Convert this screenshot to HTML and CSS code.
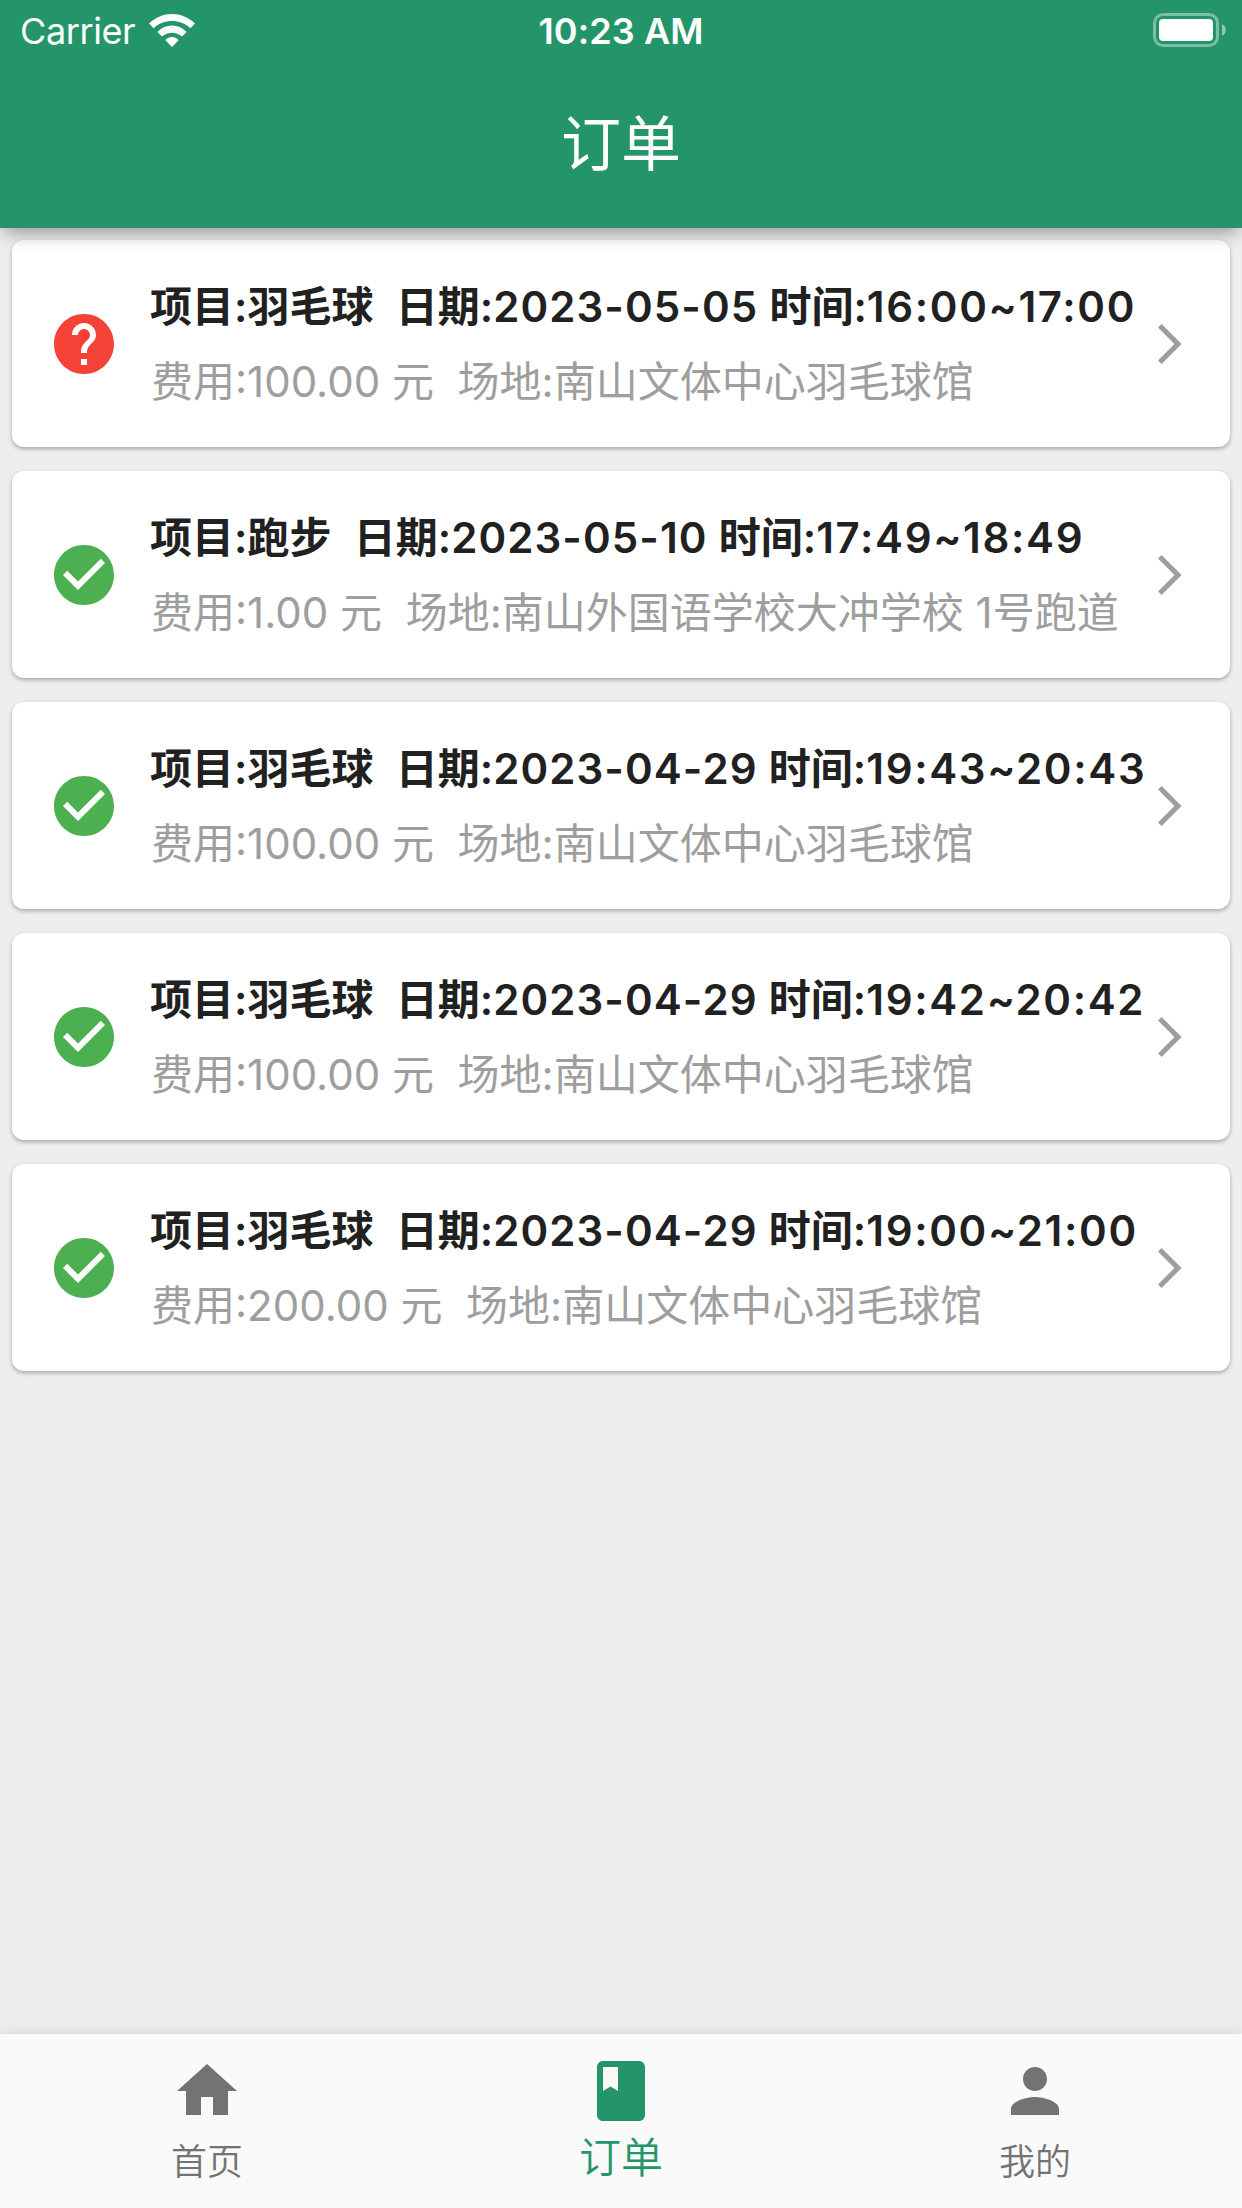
FILE: index.html
```html
<!DOCTYPE html>
<html lang="zh-CN">

<head>
    <meta charset="UTF-8">
    <meta name="viewport" content="width=device-width, initial-scale=1.0">
    <title>订单</title>
    <link rel="stylesheet" href="styles.css">
</head>

<body>
    <!-- icons shared by the rows -->
    <svg width="0" height="0" class="sprite">
        <symbol id="check" viewBox="0 0 24 24">
            <path d="M12 2C6.48 2 2 6.48 2 12s4.48 10 10 10 10-4.48 10-10S17.52 2 12 2zm-2 15l-5-5 1.41-1.41L10 14.17l7.59-7.59L19 8l-9 9z" />
        </symbol>
        <symbol id="help" viewBox="0 0 24 24">
            <path d="M12 2C6.48 2 2 6.48 2 12s4.48 10 10 10 10-4.48 10-10S17.52 2 12 2zm1 17h-2v-2h2v2zm2.07-7.75l-.9.92C13.45 12.9 13 13.5 13 15h-2v-.5c0-1.1.45-2.1 1.17-2.83l1.24-1.26c.37-.36.59-.86.59-1.41 0-1.1-.9-2-2-2s-2 .9-2 2H8c0-2.21 1.79-4 4-4s4 1.79 4 4c0 .88-.36 1.68-.93 2.25z" />
        </symbol>
        <symbol id="arrow" viewBox="0 0 24 40">
            <path d="M0 3.6L3.6 0l20 20-20 20L0 36.4 16.4 20z" />
        </symbol>
    </svg>

    <header class="header">
        <div class="status-bar">
            <div class="status-left">
                <span class="carrier">Carrier</span>
                <svg class="wifi" viewBox="0 0 46 33">
                    <path d="M0 9.6C13-3.2 33-3.2 46 9.6l-4.6 4.7C31 4.6 15 4.6 4.6 14.3z" />
                    <path d="M8.3 18c8.2-8.6 21.2-8.6 29.4 0l-4.7 4.6c-5.6-5.2-14.4-5.2-20 0z" />
                    <path d="M16.4 26.3c3.5-4.4 9.7-4.4 13.2 0L23 33z" />
                </svg>
            </div>
            <div class="time">10:23 AM</div>
            <div class="status-right">
                <svg class="battery" viewBox="0 0 74 34">
                    <rect class="battery-line" x="1.5" y="1.5" width="63" height="31" rx="8.5" />
                    <rect x="6" y="6" width="54" height="22" rx="4" />
                    <path class="battery-tip" d="M69 11c5 2.6 5 9.4 0 12z" />
                </svg>
            </div>
        </div>
        <h1>订单</h1>
    </header>

    <main class="orders">
        <div class="card">
            <svg class="state pending"><use href="#help" /></svg>
            <div class="info">
                <div class="title">项目:羽毛球&nbsp; 日期:<span class="day">2023-05-05</span> 时间:<span class="hours">16:00~17:00</span></div>
                <div class="subtitle">费用:100.00 元&nbsp; 场地:南山文体中心羽毛球馆</div>
            </div>
            <svg class="arrow"><use href="#arrow" /></svg>
        </div>
        <div class="card">
            <svg class="state done"><use href="#check" /></svg>
            <div class="info">
                <div class="title">项目:跑步&nbsp; 日期:<span class="day">2023-05-10</span> 时间:<span class="hours">17:49~18:49</span></div>
                <div class="subtitle">费用:1.00 元&nbsp; 场地:南山外国语学校大冲学校 1号跑道</div>
            </div>
            <svg class="arrow"><use href="#arrow" /></svg>
        </div>
        <div class="card">
            <svg class="state done"><use href="#check" /></svg>
            <div class="info">
                <div class="title">项目:羽毛球&nbsp; 日期:<span class="day">2023-04-29</span> 时间:<span class="hours">19:43~20:43</span></div>
                <div class="subtitle">费用:100.00 元&nbsp; 场地:南山文体中心羽毛球馆</div>
            </div>
            <svg class="arrow"><use href="#arrow" /></svg>
        </div>
        <div class="card">
            <svg class="state done"><use href="#check" /></svg>
            <div class="info">
                <div class="title">项目:羽毛球&nbsp; 日期:<span class="day">2023-04-29</span> 时间:<span class="hours">19:42~20:42</span></div>
                <div class="subtitle">费用:100.00 元&nbsp; 场地:南山文体中心羽毛球馆</div>
            </div>
            <svg class="arrow"><use href="#arrow" /></svg>
        </div>
        <div class="card">
            <svg class="state done"><use href="#check" /></svg>
            <div class="info">
                <div class="title">项目:羽毛球&nbsp; 日期:<span class="day">2023-04-29</span> 时间:<span class="hours">19:00~21:00</span></div>
                <div class="subtitle">费用:200.00 元&nbsp; 场地:南山文体中心羽毛球馆</div>
            </div>
            <svg class="arrow"><use href="#arrow" /></svg>
        </div>
    </main>

    <nav class="tabs">
        <a class="tab">
            <svg viewBox="0 0 24 24"><path d="M10 20v-6h4v6h5v-8h3L12 3 2 12h3v8z" /></svg>
            <span>首页</span>
        </a>
        <a class="tab active">
            <svg viewBox="0 0 24 24">
                <path d="M18 2H6c-1.1 0-2 .9-2 2v16c0 1.1.9 2 2 2h12c1.1 0 2-.9 2-2V4c0-1.1-.9-2-2-2zM6 4h5v8l-2.5-1.5L6 12V4z" />
            </svg>
            <span>订单</span>
        </a>
        <a class="tab">
            <svg viewBox="0 0 24 24"><path d="M12 12c2.21 0 4-1.79 4-4s-1.79-4-4-4-4 1.79-4 4 1.79 4 4 4zm0 2c-2.67 0-8 1.34-8 4v2h16v-2c0-2.66-5.33-4-8-4z" /></svg>
            <span>我的</span>
        </a>
    </nav>
</body>

</html>
```

FILE: styles.css
```css
* {
    box-sizing: border-box;
}

body {
    margin: 0;
    height: 2208px;
    display: flex;
    flex-direction: column;
    overflow: hidden;
    background-color: #eee;
    font-family: Inter, "Noto Sans CJK SC", sans-serif;
}

svg {
    display: block;
    fill: currentColor;
}

.sprite {
    position: absolute;
}

.header {
    position: relative;
    z-index: 1;
    height: 228px;
    background-color: #239569;
    color: #fff;
    box-shadow: 0 8px 18px -4px rgba(0, 0, 0, 0.4);
}

.status-bar {
    display: grid;
    grid-template-columns: 1fr auto 1fr;
    align-items: center;
    height: 60px;
    padding: 0 15px;
    font-size: 36px;
}

.status-left {
    display: flex;
    align-items: center;
    gap: 14px;
    padding-left: 5px;
}

.carrier {
    padding-top: 2px;
    letter-spacing: -0.4px;
}

.wifi {
    width: 46px;
    height: 33px;
}

.time {
    padding-top: 2px;
    font-weight: 600;
    letter-spacing: 0.1px;
}

.status-right {
    display: flex;
    justify-content: flex-end;
}

.battery {
    width: 74px;
    height: 34px;
}

.battery-line {
    fill: none;
    stroke: #fff;
    stroke-width: 3;
    opacity: 0.4;
}

.battery-tip {
    opacity: 0.5;
}

h1 {
    margin: 0;
    height: 168px;
    line-height: 168px;
    text-align: center;
    font-size: 60px;
    font-weight: 400;
}

.orders {
    flex: 1;
    display: flex;
    flex-direction: column;
    gap: 24px;
    padding: 12px;
}

.card {
    display: flex;
    align-items: center;
    height: 207px;
    padding: 0 48px 0 36px;
    background-color: #fff;
    border-radius: 12px;
    box-shadow: 0 2px 4px rgba(0, 0, 0, 0.3);
}

.state {
    width: 72px;
    height: 72px;
    flex: none;
}

.pending {
    color: #f44336;
}

.done {
    color: #4caf50;
}

.info {
    flex: 1;
    min-width: 0;
    padding-left: 30px;
    white-space: nowrap;
}

.title {
    height: 75px;
    line-height: 75px;
    font-size: 42px;
    font-weight: 600;
    color: #212121;
    word-spacing: 0.6px;
}

.day {
    letter-spacing: 1.1px;
}

.hours {
    letter-spacing: 1.65px;
}

.subtitle {
    height: 75px;
    line-height: 75px;
    padding-left: 1px;
    font-size: 42px;
    color: #9e9e9e;
}

.arrow {
    width: 24px;
    height: 40px;
    flex: none;
    color: #9e9e9e;
}

.tabs {
    display: flex;
    height: 174px;
    background-color: #fafafa;
    box-shadow: 0 0 14px rgba(0, 0, 0, 0.12);
}

.tab {
    flex: 1;
    display: flex;
    flex-direction: column;
    align-items: center;
    padding-top: 21px;
    color: #737373;
    font-size: 36px;
    font-weight: 350;
}

.tab svg {
    width: 72px;
    height: 72px;
}

.tab span {
    line-height: 70px;
}

.tab.active {
    color: #239569;
    font-size: 42px;
}

.tab.active span {
    line-height: 61px;
}
```
